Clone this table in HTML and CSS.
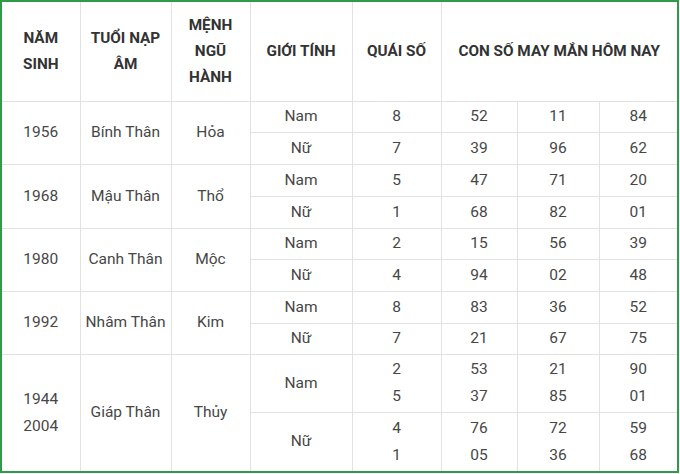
FILE: index.html
```html
<!DOCTYPE html>
<html lang="vi">
<head>
<meta charset="utf-8">
<link rel="stylesheet" href="styles.css">
</head>
<body>
<div class="frame">
<table class="lucky">
<colgroup>
<col class="c1"><col class="c2"><col class="c3"><col class="c4"><col class="c5"><col class="c6"><col class="c7"><col class="c8">
</colgroup>
<thead>
<tr class="h">
<th>Năm<br>sinh</th>
<th>Tuổi nạp<br>âm</th>
<th>Mệnh<br>ngũ<br>hành</th>
<th>Giới tính</th>
<th>Quái số</th>
<th colspan="3">Con số may mắn hôm nay</th>
</tr>
</thead>
<tbody>
<tr class="r31"><td rowspan="2">1956</td><td rowspan="2">Bính Thân</td><td rowspan="2">Hỏa</td><td>Nam</td><td>8</td><td>52</td><td>11</td><td>84</td></tr>
<tr class="r32"><td>Nữ</td><td>7</td><td>39</td><td>96</td><td>62</td></tr>
<tr class="r32"><td rowspan="2">1968</td><td rowspan="2">Mậu Thân</td><td rowspan="2">Thổ</td><td>Nam</td><td>5</td><td>47</td><td>71</td><td>20</td></tr>
<tr class="r32"><td>Nữ</td><td>1</td><td>68</td><td>82</td><td>01</td></tr>
<tr class="r31"><td rowspan="2">1980</td><td rowspan="2">Canh Thân</td><td rowspan="2">Mộc</td><td>Nam</td><td>2</td><td>15</td><td>56</td><td>39</td></tr>
<tr class="r32"><td>Nữ</td><td>4</td><td>94</td><td>02</td><td>48</td></tr>
<tr class="r32"><td rowspan="2">1992</td><td rowspan="2">Nhâm Thân</td><td rowspan="2">Kim</td><td>Nam</td><td>8</td><td>83</td><td>36</td><td>52</td></tr>
<tr class="r31"><td>Nữ</td><td>7</td><td>21</td><td>67</td><td>75</td></tr>
<tr class="r58"><td rowspan="2">1944<br>2004</td><td rowspan="2">Giáp Thân</td><td rowspan="2">Thủy</td><td>Nam</td><td>2<br>5</td><td>53<br>37</td><td>21<br>85</td><td>90<br>01</td></tr>
<tr class="r59"><td>Nữ</td><td>4<br>1</td><td>76<br>05</td><td>72<br>36</td><td>59<br>68</td></tr>
</tbody>
</table>
</div>
</body>
</html>
```
FILE: styles.css
```css
html, body {
  margin: 0;
  padding: 0;
  background: #ffffff;
}
.frame {
  width: 679px;
  height: 473px;
  box-sizing: border-box;
  border: 2px solid #2f9a47;
  overflow: hidden;
  background: #ffffff;
}
.lucky {
  width: 675px;
  table-layout: fixed;
  border-collapse: collapse;
  font-family: Roboto, "Liberation Sans", sans-serif;
  font-size: 15.5px;
  color: #474747;
}
.c1 { width: 78px; }
.c2 { width: 91px; }
.c3 { width: 79px; }
.c4 { width: 102px; }
.c5 { width: 89px; }
.c6 { width: 76px; }
.c7 { width: 82px; }
.c8 { width: 78px; }
.lucky th,
.lucky td {
  border: 1px solid #e2e2e2;
  padding: 0;
  text-align: center;
  vertical-align: middle;
}
.lucky tr > :first-child { border-left: none; }
.lucky tr > :last-child { border-right: none; }
.lucky thead th { border-top: none; }
.lucky tbody tr:last-child td { border-bottom: none; }
.lucky .r58 td[rowspan] { border-bottom: none; }
.lucky th {
  font-size: 15.3px;
  font-weight: 700;
  text-transform: uppercase;
  color: #333333;
  line-height: 26px;
}
.lucky td { line-height: 27px; }
.h { height: 99px; }
.r31 { height: 31px; }
.r32 { height: 32px; }
.r58 { height: 58px; }
.r59 { height: 59px; }
```
